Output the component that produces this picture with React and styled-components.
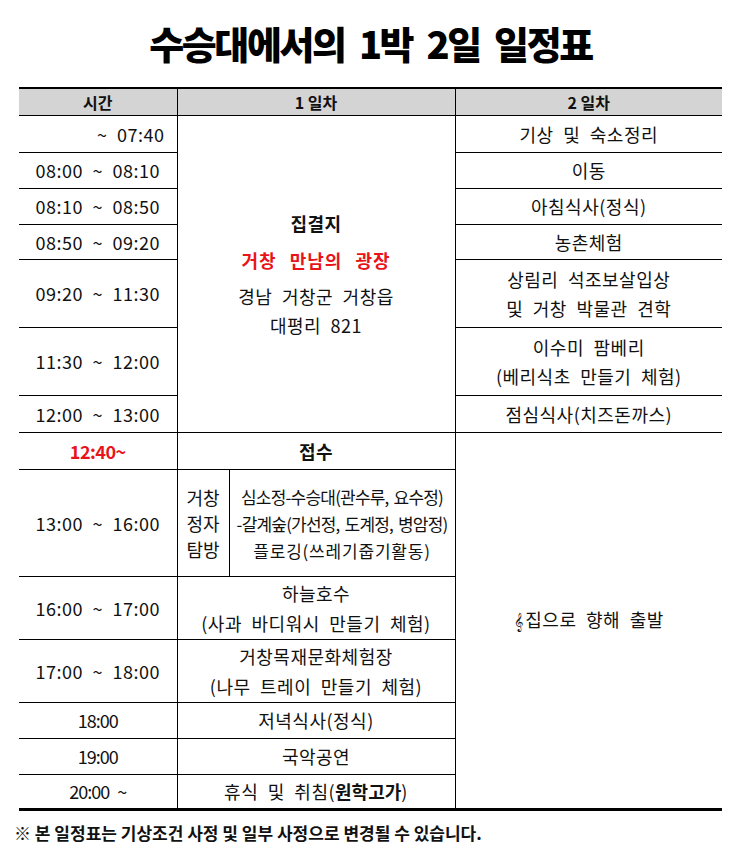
import styled, { createGlobalStyle } from 'styled-components'

const GlobalStyle = createGlobalStyle`
  html, body { margin: 0; padding: 0; background: #fff; }
  body { font-family: "Noto Sans CJK KR", "Noto Sans", sans-serif; color: #111; }
`

const Page = styled.div`width: 744px; height: 867px; padding: 0 22px 0 19px; box-sizing: border-box;`

const Title = styled.h1`
  margin: 22px 0 24px; height: 41px; line-height: 41px;
  text-align: center; font-size: 38px; font-weight: 900; letter-spacing: -2.4px; word-spacing: 8px;
  color: #000;
`

const Table = styled.table`
  width: 703px; border-collapse: collapse; table-layout: fixed;
  border-top: 2px solid #000; border-bottom: 3px solid #000;
`

const Th = styled.th`
  height: 26px; padding: 0; background: #d4d4d4;
  font-size: 16px; font-weight: 700; line-height: 20px;
  border-bottom: 1.5px solid #000;
  border-left: ${({ $first }) => ($first ? 'none' : '1px solid #000')};
`

const Row = styled.tr`height: ${({ $h }) => $h}px;`

const Td = styled.td`
  padding: 0 ${({ $pr }) => $pr || 0}px 0 0;
  text-align: ${({ $align }) => $align || 'center'};
  border-top: 1px solid #000;
  border-left: ${({ $first }) => ($first ? 'none' : '1px solid #000')};
  font-size: ${({ $size }) => $size || 18}px;
  font-weight: ${({ $bold }) => ($bold ? 700 : 400)};
  color: ${({ $red }) => ($red ? '#e8141a' : '#111')};
  letter-spacing: ${({ $ls }) => $ls ?? 0.5}px;
  word-spacing: 5px;
  line-height: ${({ $lh }) => $lh || 29}px;
  vertical-align: middle;
  white-space: nowrap;
  overflow: visible;
`

const Line = styled.div`
  font-weight: ${({ $bold }) => ($bold ? 700 : 'inherit')};
  color: ${({ $red }) => ($red ? '#e8141a' : 'inherit')};
  letter-spacing: ${({ $ls }) => ($ls !== undefined ? `${$ls}px` : 'inherit')};
  word-spacing: ${({ $ws }) => ($ws !== undefined ? `${$ws}px` : 'inherit')};
  margin-bottom: ${({ $mb }) => $mb || 0}px;
`

const Strong = styled.b`font-weight: 700; letter-spacing: 0;`

const Clef = styled.span`font-family: "DejaVu Sans", serif; font-size: 16px; margin-right: 2px;`

const Note = styled.p`
  margin: 9px 0 0 -5px; font-size: 17px; font-weight: 700; letter-spacing: 0;
  color: #111;
`

const App = () => (
  <Page>
    <GlobalStyle />
    <Title>수승대에서의 1박 2일 일정표</Title>
    <Table>
      <colgroup>
        <col style={{ width: 158 }} />
        <col style={{ width: 52 }} />
        <col style={{ width: 226 }} />
        <col style={{ width: 267 }} />
      </colgroup>
      <thead>
        <tr>
          <Th $first>시간</Th>
          <Th colSpan={2}>1 일차</Th>
          <Th>2 일차</Th>
        </tr>
      </thead>
      <tbody>
        <Row $h={37}>
          <Td $first $align="right" $pr={12}>~ 07:40</Td>
          <Td colSpan={2} rowSpan={7}>
            <Line $bold $mb={8}>집결지</Line>
            <Line $bold $red $mb={7} $ls={1} $ws={8}>거창 만남의 광장</Line>
            <Line>경남 거창군 거창읍</Line>
            <Line>대평리 821</Line>
          </Td>
          <Td>기상 및 숙소정리</Td>
        </Row>
        <Row $h={36}>
          <Td $first>08:00 ~ 08:10</Td>
          <Td>이동</Td>
        </Row>
        <Row $h={36}>
          <Td $first>08:10 ~ 08:50</Td>
          <Td>아침식사(정식)</Td>
        </Row>
        <Row $h={35}>
          <Td $first>08:50 ~ 09:20</Td>
          <Td>농촌체험</Td>
        </Row>
        <Row $h={68}>
          <Td $first>09:20 ~ 11:30</Td>
          <Td>
            <Line>상림리 석조보살입상</Line>
            <Line>및 거창 박물관 견학</Line>
          </Td>
        </Row>
        <Row $h={68}>
          <Td $first>11:30 ~ 12:00</Td>
          <Td>
            <Line>이수미 팜베리</Line>
            <Line>(베리식초 만들기 체험)</Line>
          </Td>
        </Row>
        <Row $h={37}>
          <Td $first>12:00 ~ 13:00</Td>
          <Td>점심식사(치즈돈까스)</Td>
        </Row>
        <Row $h={37}>
          <Td $first $bold $red $ls={-0.5}>12:40~</Td>
          <Td colSpan={2} $bold>접수</Td>
          <Td rowSpan={7}>
            <Clef>𝄞</Clef>집으로 향해 출발
          </Td>
        </Row>
        <Row $h={107}>
          <Td $first>13:00 ~ 16:00</Td>
          <Td $lh={26} $ls={0}>
            <Line>거창</Line>
            <Line>정자</Line>
            <Line>탐방</Line>
          </Td>
          <Td $lh={27} $size={17}>
            <Line $ls={-0.8} $ws={2}>심소정-수승대(관수루, 요수정)</Line>
            <Line $ls={-0.8} $ws={2}>-갈계숲(가선정, 도계정, 병암정)</Line>
            <Line $ls={0.8}>플로깅(쓰레기줍기활동)</Line>
          </Td>
        </Row>
        <Row $h={63}>
          <Td $first>16:00 ~ 17:00</Td>
          <Td colSpan={2} $lh={30}>
            <Line>하늘호수</Line>
            <Line>(사과 바디워시 만들기 체험)</Line>
          </Td>
        </Row>
        <Row $h={63}>
          <Td $first>17:00 ~ 18:00</Td>
          <Td colSpan={2} $lh={30}>
            <Line>거창목재문화체험장</Line>
            <Line>(나무 트레이 만들기 체험)</Line>
          </Td>
        </Row>
        <Row $h={36}>
          <Td $first $ls={-1}>18:00</Td>
          <Td colSpan={2}>저녁식사(정식)</Td>
        </Row>
        <Row $h={36}>
          <Td $first $ls={-1}>19:00</Td>
          <Td colSpan={2}>국악공연</Td>
        </Row>
        <Row $h={35}>
          <Td $first $ls={-1}>20:00 ~</Td>
          <Td colSpan={2}>휴식 및 취침(<Strong>원학고가</Strong>)</Td>
        </Row>
      </tbody>
    </Table>
    <Note>※ 본 일정표는 기상조건 사정 및 일부 사정으로 변경될 수 있습니다.</Note>
  </Page>
)

export default App
